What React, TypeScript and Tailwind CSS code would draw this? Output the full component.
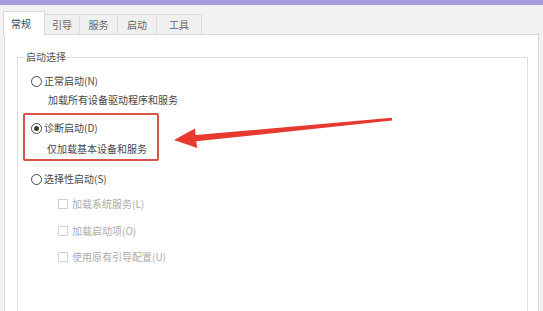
import React from "react";

const Radio = ({ checked }: { checked?: boolean }) => (
  <span className="flex h-[11px] w-[11px] shrink-0 items-center justify-center rounded-full border border-[#4a4a4a] bg-white">
    {checked && <span className="h-[5px] w-[5px] rounded-full bg-[#3a3a3a]" />}
  </span>
);

const Check = () => (
  <span className="h-[10px] w-[10px] shrink-0 border border-[#d2d2d2] bg-white" />
);

export default function App() {
  return (
    <div className="relative h-[311px] w-[543px] overflow-hidden bg-[#f2f2f2] text-[10px] leading-[16px] text-[#474747] font-['Microsoft_YaHei','Noto_Sans_CJK_SC',sans-serif]">
      <div className="h-[5px] bg-[#a59fdd]" />
      <div className="flex h-[29px] items-end pl-[3px]">
        <div className="relative z-10 -mb-px flex h-[24px] w-[42px] items-center justify-start border-x border-t border-[#d9d9d9] bg-white pl-[7px] text-[#444]">
          常规
        </div>
        <div className="flex h-[20px] w-[35px] items-center justify-center border-t border-r border-[#dcdcdc] bg-[#f0f0f0] text-[#666]">
          引导
        </div>
        <div className="flex h-[20px] w-[38px] items-center justify-center border-t border-r border-[#dcdcdc] bg-[#f0f0f0] text-[#666]">
          服务
        </div>
        <div className="flex h-[20px] w-[39px] items-center justify-center border-t border-r border-[#dcdcdc] bg-[#f0f0f0] text-[#666]">
          启动
        </div>
        <div className="flex h-[20px] w-[45px] items-center justify-center border-t border-r border-[#dcdcdc] bg-[#f0f0f0] text-[#666]">
          工具
        </div>
      </div>
      <div className="ml-[4px] h-[300px] w-[535px] border border-[#d9d9d9] bg-white">
        <fieldset className="ml-[12px] mt-[15px] h-[400px] w-[511px] border border-[#dedede] pl-[5px]">
          <legend className="ml-[2px] px-[1px] leading-[14px] text-[#555]">启动选择</legend>
          <div className="mt-[9px] flex h-[16px] items-center gap-[2px] pl-[8px]">
            <Radio />
            <span>正常启动(N)</span>
          </div>
          <div className="mt-[3px] pl-[25px]">加载所有设备驱动程序和服务</div>
          <div className="mt-[5px] w-[136px] rounded-[2px] border-2 border-[#d9534a] pb-[2px] pl-[6px] pt-[5px]">
            <div className="flex h-[16px] items-center gap-[2px]">
              <Radio checked />
              <span>诊断启动(D)</span>
            </div>
            <div className="mt-[5px] pl-[16px]">仅加载基本设备和服务</div>
          </div>
          <div className="mt-[10px] flex h-[16px] items-center gap-[2px] pl-[8px]">
            <Radio />
            <span>选择性启动(S)</span>
          </div>
          <div className="mt-[9px] flex h-[16px] items-center gap-[4px] pl-[35px] text-[#ababab]">
            <Check />
            <span>加载系统服务(L)</span>
          </div>
          <div className="mt-[11px] flex h-[16px] items-center gap-[4px] pl-[35px] text-[#ababab]">
            <Check />
            <span>加载启动项(O)</span>
          </div>
          <div className="mt-[10px] flex h-[16px] items-center gap-[4px] pl-[35px] text-[#ababab]">
            <Check />
            <span>使用原有引导配置(U)</span>
          </div>
        </fieldset>
      </div>
      <svg className="pointer-events-none absolute left-0 top-0" width="543" height="311" viewBox="0 0 543 311">
        <polygon
          points="174,140 195,128.5 195.6,135 391.8,117.8 392.2,120.6 196.2,141.2 197.2,148"
          fill="#e6392f"
        />
      </svg>
    </div>
  );
}
